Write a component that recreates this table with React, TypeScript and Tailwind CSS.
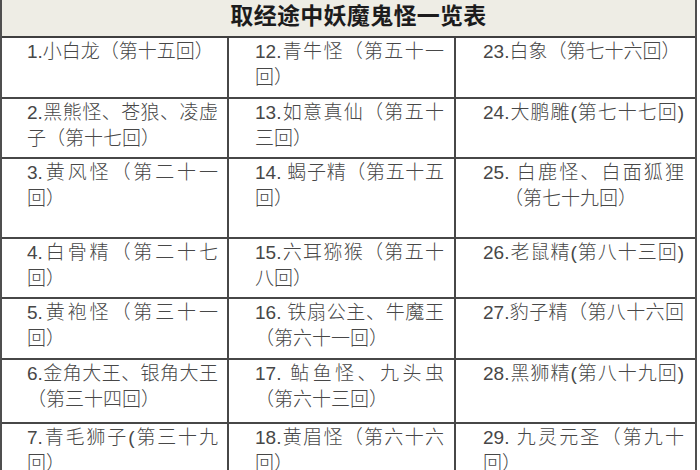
import React from 'react';

type Cell = { lines: string[]; fill?: boolean[]; indent?: boolean[] };

// each row: [height incl. bottom border, col1, col2, col3]
const rows: { h: string; cells: Cell[] }[] = [
  {
    h: 'h-[61px]',
    cells: [
      { lines: ['1.小白龙（第十五回）'], fill: [false] },
      { lines: ['12.青牛怪（第五十一', '回）'] },
      { lines: ['23.白象（第七十六回）'], fill: [false] },
    ],
  },
  {
    h: 'h-[60px]',
    cells: [
      { lines: ['2.黑熊怪、苍狼、凌虚', '子（第十七回）'] },
      { lines: ['13.如意真仙（第五十', '三回）'] },
      { lines: ['24.大鹏雕(第七十七回)'], fill: [true] },
    ],
  },
  {
    h: 'h-[80px]',
    cells: [
      { lines: ['3.黄风怪（第二十一', '回）'] },
      { lines: ['14. 蝎子精（第五十五', '回）'] },
      { lines: ['25. 白鹿怪、白面狐狸', '（第七十九回）'], indent: [false, true] },
    ],
  },
  {
    h: 'h-[60px]',
    cells: [
      { lines: ['4.白骨精（第二十七', '回）'] },
      { lines: ['15.六耳猕猴（第五十', '八回）'] },
      { lines: ['26.老鼠精(第八十三回)'], fill: [true] },
    ],
  },
  {
    h: 'h-[61px]',
    cells: [
      { lines: ['5.黄袍怪（第三十一', '回）'] },
      { lines: ['16. 铁扇公主、牛魔王', '（第六十一回）'] },
      { lines: ['27.豹子精（第八十六回'], fill: [true] },
    ],
  },
  {
    h: 'h-[64px]',
    cells: [
      { lines: ['6.金角大王、银角大王', '（第三十四回）'] },
      { lines: ['17. 鲇鱼怪、九头虫', '（第六十三回）'] },
      { lines: ['28.黑狮精(第八十九回)'], fill: [true] },
    ],
  },
  {
    h: 'h-[70px]',
    cells: [
      { lines: ['7.青毛狮子(第三十九', '回）'] },
      { lines: ['18.黄眉怪（第六十六', '回）'] },
      { lines: ['29. 九灵元圣（第九十', '回）'] },
    ],
  },
];

const colStyles = [
  'w-[227px] border-r-2 border-[#474747] pl-[25px] pr-[9px]',
  'w-[227px] border-r-2 border-[#474747] pl-[26px] pr-[10px]',
  'w-[239px] pl-[27px] pr-[11px]',
];

function CellView({ cell, col }: { cell: Cell; col: number }) {
  return (
    <div className={`${colStyles[col]} h-full pt-[1px]`}>
      {cell.lines.map((line, i) => {
        const last = i === cell.lines.length - 1;
        const fill = cell.fill ? cell.fill[i] : !last;
        return (
          <div
            key={i}
            className={`whitespace-nowrap leading-[26px] ${
              fill ? 'text-justify [text-align-last:justify]' : 'text-left'
            } ${cell.indent && cell.indent[i] ? 'pl-[21px]' : ''}`}
          >
            {line}
          </div>
        );
      })}
    </div>
  );
}

export default function App() {
  return (
    <div className="w-[700px] h-[470px] overflow-hidden bg-white">
      <div
        className="w-[697px] border-x-2 border-[#4f4f4f] text-[19px] text-[#474747] font-light"
        style={{ fontFamily: '"Liberation Sans", "Noto Sans CJK SC", sans-serif' }}
      >
        {/* title */}
        <div className="h-[38px] border-b-2 border-[#3f3f3f] bg-[#eeede5] pl-[20px] text-center">
          <span
            className="text-[23px] font-bold leading-[29px] tracking-[0.3px] text-[#1c1c1c]"
            style={{ fontFamily: '"Noto Sans CJK SC", sans-serif' }}
          >
            取经途中妖魔鬼怪一览表
          </span>
        </div>

        {rows.map((row, r) => (
          <div key={r} className={`flex ${row.h} border-b-2 border-[#474747]`}>
            {row.cells.map((cell, c) => (
              <CellView key={c} cell={cell} col={c} />
            ))}
          </div>
        ))}
      </div>
    </div>
  );
}
